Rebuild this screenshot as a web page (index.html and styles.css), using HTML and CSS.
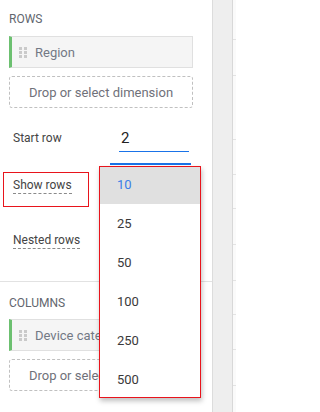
FILE: index.html
```html
<!DOCTYPE html>
<html>
<head>
<meta charset="utf-8">
<link rel="stylesheet" href="styles.css">
</head>
<body>
<div class="page">
  <div class="panel">
    <div class="section rows-section">
      <div class="label">ROWS</div>
      <div class="chip">
        <svg class="handle" width="8" height="11" viewBox="0 0 8 11"><rect x="0" y="0" width="3" height="3"/><rect x="5" y="0" width="3" height="3"/><rect x="0" y="4" width="3" height="3"/><rect x="5" y="4" width="3" height="3"/><rect x="0" y="8" width="3" height="3"/><rect x="5" y="8" width="3" height="3"/></svg>
        <span class="chip-text">Region</span>
      </div>
      <div class="drop">Drop or select dimension</div>
      <div class="field start-row">
        <span class="field-label">Start row</span>
        <span class="input">2</span>
      </div>
      <div class="field show-row">
        <span class="field-label dashed">Show rows</span>
        <span class="select"></span>
      </div>
      <div class="field nested-row">
        <span class="field-label dashed">Nested rows</span>
      </div>
    </div>
    <div class="section cols-section">
      <div class="label">COLUMNS</div>
      <div class="chip">
        <svg class="handle" width="8" height="11" viewBox="0 0 8 11"><rect x="0" y="0" width="3" height="3"/><rect x="5" y="0" width="3" height="3"/><rect x="0" y="4" width="3" height="3"/><rect x="5" y="4" width="3" height="3"/><rect x="0" y="8" width="3" height="3"/><rect x="5" y="8" width="3" height="3"/></svg>
        <span class="chip-text">Device category</span>
      </div>
      <div class="drop">Drop or select dimension</div>
    </div>
    <div class="highlight-box"></div>
    <div class="dropdown">
      <div class="opt selected">10</div>
      <div class="opt">25</div>
      <div class="opt">50</div>
      <div class="opt">100</div>
      <div class="opt">250</div>
      <div class="opt">500</div>
    </div>
  </div>
  <div class="gutter"></div>
  <div class="grid">
    <div class="gl" style="height:40px"></div>
    <div class="gl" style="height:36px"></div>
    <div class="gl" style="height:64px"></div>
    <div class="gl" style="height:35px"></div>
    <div class="gl" style="height:34px"></div>
    <div class="gl" style="height:36px"></div>
    <div class="gl" style="height:36px"></div>
    <div class="gl" style="height:34px"></div>
    <div class="gl" style="height:35px"></div>
    <div class="gl" style="height:36px"></div>
  </div>
</div>
</body>
</html>
```
FILE: styles.css
```css
* { box-sizing: border-box; }
html, body { margin: 0; padding: 0; }
body {
  width: 236px;
  height: 412px;
  overflow: hidden;
  font-family: Roboto, "Liberation Sans", Arial, sans-serif;
  background: #fff;
}
.page {
  display: flex;
  height: 412px;
}
.panel {
  position: relative;
  width: 213px;
  flex: none;
  border-right: 1px solid #dcdcdc;
  background: #fff;
}
.gutter {
  width: 20px;
  flex: none;
  background: #eeeeee;
  border-right: 1px solid #d8d8d8;
}
.grid {
  flex: 1;
  background: #fafafa;
}
.gl {
  border-bottom: 1px solid #e3e3e3;
}
.section {
  padding: 0 19px 0 9px;
}
.rows-section {
  padding-top: 12px;
  height: 282px;
  border-bottom: 1px solid #e2e2e2;
}
.cols-section {
  padding-top: 14px;
}
.label {
  font-size: 12px;
  line-height: 14px;
  color: #62666e;
}
.rows-section .chip { margin-top: 10px; }
.cols-section .chip { margin-top: 9px; }
.chip {
  height: 32px;
  background: #f5f5f5;
  border: 1px solid #e0e0e0;
  border-left: 3px solid #6cc070;
  display: flex;
  align-items: center;
  padding-left: 7px;
  overflow: hidden;
  white-space: nowrap;
}
.handle {
  fill: #cacaca;
  flex: none;
}
.chip-text {
  margin-left: 8px;
  font-size: 13px;
  color: #737985;
}
.drop {
  margin-top: 8px;
  height: 32px;
  border: 1px dashed #c0c0c0;
  border-radius: 3px;
  display: flex;
  align-items: center;
  justify-content: center;
  font-size: 13px;
  color: #70717a;
  white-space: nowrap;
  overflow: hidden;
}
.field {
  display: flex;
  align-items: flex-start;
  padding-left: 4px;
  font-size: 12px;
  color: #444;
}
.field-label {
  line-height: 14px;
}
.dashed {
  border-bottom: 1px dashed #8a8a8a;
  padding-bottom: 1px;
}
.start-row {
  margin-top: 20px;
  height: 26px;
}
.start-row .field-label {
  margin-top: 3px;
}
.input {
  margin-left: auto;
  width: 70px;
  margin-right: 4px;
  height: 24px;
  font-size: 15px;
  line-height: 20px;
  color: #222;
  padding-left: 2px;
  border-bottom: 1px solid #1a73e8;
}
.show-row {
  margin-top: 24px;
  height: 32px;
  position: relative;
}
.select {
  position: absolute;
  left: 101px;
  right: 2px;
  top: -15px;
  height: 2px;
  background: #1a73e8;
}
.nested-row {
  margin-top: 23px;
  height: 20px;
}
.highlight-box {
  position: absolute;
  left: 3px;
  top: 172px;
  width: 86px;
  height: 35px;
  border: 1px solid #e8141c;
}
.dropdown {
  position: absolute;
  left: 99px;
  top: 166px;
  width: 102px;
  height: 232px;
  background: #fff;
  border: 1px solid #e8141c;
  box-shadow: 1px 3px 5px rgba(0,0,0,0.25);
  overflow: hidden;
}
.opt {
  height: 39px;
  display: flex;
  align-items: center;
  padding-left: 17px;
  font-size: 13px;
  color: #3a3a3a;
}
.opt.selected {
  margin-top: -2px;
  background: #e0e0e0;
  color: #3b7de8;
}
```
